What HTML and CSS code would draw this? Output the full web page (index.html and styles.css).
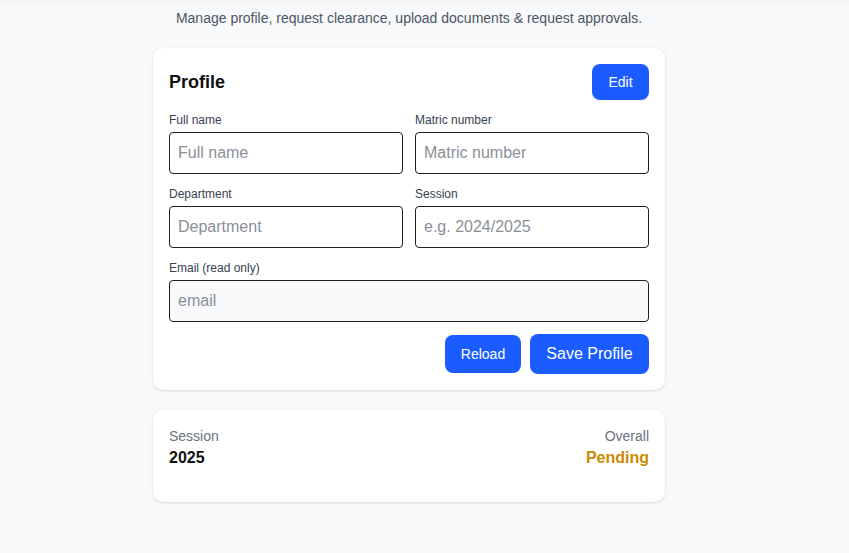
FILE: index.html
```html
<!DOCTYPE html>
<html lang="en">
<head>
<meta charset="utf-8">
<title>Profile</title>
<link rel="stylesheet" href="styles.css">
</head>
<body>
<div class="topbar"></div>
<main class="wrap">
  <p class="subtitle">Manage profile, request clearance, upload documents &amp; request approvals.</p>
  <section class="card profile">
    <div class="card-head">
      <h2>Profile</h2>
      <button class="btn btn-edit">Edit</button>
    </div>
    <div class="grid">
      <label class="field">
        <span class="label">Full name</span>
        <input type="text" placeholder="Full name">
      </label>
      <label class="field">
        <span class="label">Matric number</span>
        <input type="text" placeholder="Matric number">
      </label>
      <label class="field">
        <span class="label">Department</span>
        <input type="text" placeholder="Department">
      </label>
      <label class="field">
        <span class="label">Session</span>
        <input type="text" placeholder="e.g. 2024/2025">
      </label>
      <label class="field full">
        <span class="label">Email (read only)</span>
        <input type="text" class="readonly" placeholder="email" readonly>
      </label>
    </div>
    <div class="actions">
      <button class="btn btn-reload">Reload</button>
      <button class="btn btn-save">Save Profile</button>
    </div>
  </section>
  <section class="card summary">
    <div class="col">
      <span class="muted">Session</span>
      <strong>2025</strong>
    </div>
    <div class="col right">
      <span class="muted">Overall</span>
      <strong class="pending">Pending</strong>
    </div>
  </section>
</main>
</body>
</html>
```
FILE: styles.css
```css
* { box-sizing: border-box; }
html, body { margin: 0; padding: 0; }
body {
  background: #f8f9fb;
  font-family: "Liberation Sans", Arial, sans-serif;
  color: #111827;
  height: 553px;
  overflow: hidden;
}
.topbar {
  height: 2px;
  background: #f3f4f6;
  box-shadow: 0 1px 2px rgba(0,0,0,0.04);
}
.wrap {
  width: 512px;
  margin-left: 153px;
}
.subtitle {
  margin: 8px 0 0;
  text-align: center;
  font-size: 14px;
  line-height: 16px;
  color: #4b5563;
}
.card {
  background: #fff;
  border-radius: 10px;
  box-shadow: 0 1px 3px rgba(0,0,0,0.12), 0 0 1px rgba(0,0,0,0.06);
  padding: 16px;
}
.profile { margin-top: 22px; }
.card-head {
  display: flex;
  justify-content: space-between;
  align-items: center;
  height: 36px;
}
.card-head h2 {
  margin: 0;
  font-size: 18px;
  font-weight: 700;
  color: #111;
}
.btn {
  border: none;
  background: #1a5cff;
  color: #fff;
  font-family: "Liberation Sans", Arial, sans-serif;
  border-radius: 8px;
  cursor: pointer;
}
.btn-edit {
  width: 57px;
  height: 36px;
  font-size: 14px;
}
.grid {
  display: grid;
  grid-template-columns: 1fr 1fr;
  column-gap: 12px;
  row-gap: 13px;
  margin-top: 13px;
}
.field {
  display: flex;
  flex-direction: column;
  gap: 5px;
}
.field.full { grid-column: 1 / -1; }
.label {
  font-size: 12px;
  line-height: 14px;
  color: #374151;
}
.field input {
  height: 42px;
  border: 1px solid #1f1f1f;
  border-radius: 4px;
  padding: 0 8px;
  font-size: 16px;
  font-family: "Liberation Sans", Arial, sans-serif;
  background: #fff;
  color: #111;
  outline: none;
}
.field input::placeholder { color: #8a8f97; }
.field input.readonly { background: #f8f9fb; }
.actions {
  display: flex;
  justify-content: flex-end;
  align-items: center;
  gap: 9px;
  margin-top: 12px;
}
.btn-reload {
  width: 76px;
  height: 38px;
  font-size: 14px;
}
.btn-save {
  width: 119px;
  height: 40px;
  font-size: 16px;
}
.summary {
  margin-top: 20px;
  height: 92px;
  padding: 18px 16px;
  display: flex;
  justify-content: space-between;
}
.col {
  display: flex;
  flex-direction: column;
  gap: 5px;
}
.col.right { align-items: flex-end; }
.muted {
  font-size: 14px;
  line-height: 16px;
  color: #6b7280;
}
.col strong {
  font-size: 16px;
  line-height: 18px;
  font-weight: 700;
  color: #111;
}
.col strong.pending { color: #ca8a04; }
```
